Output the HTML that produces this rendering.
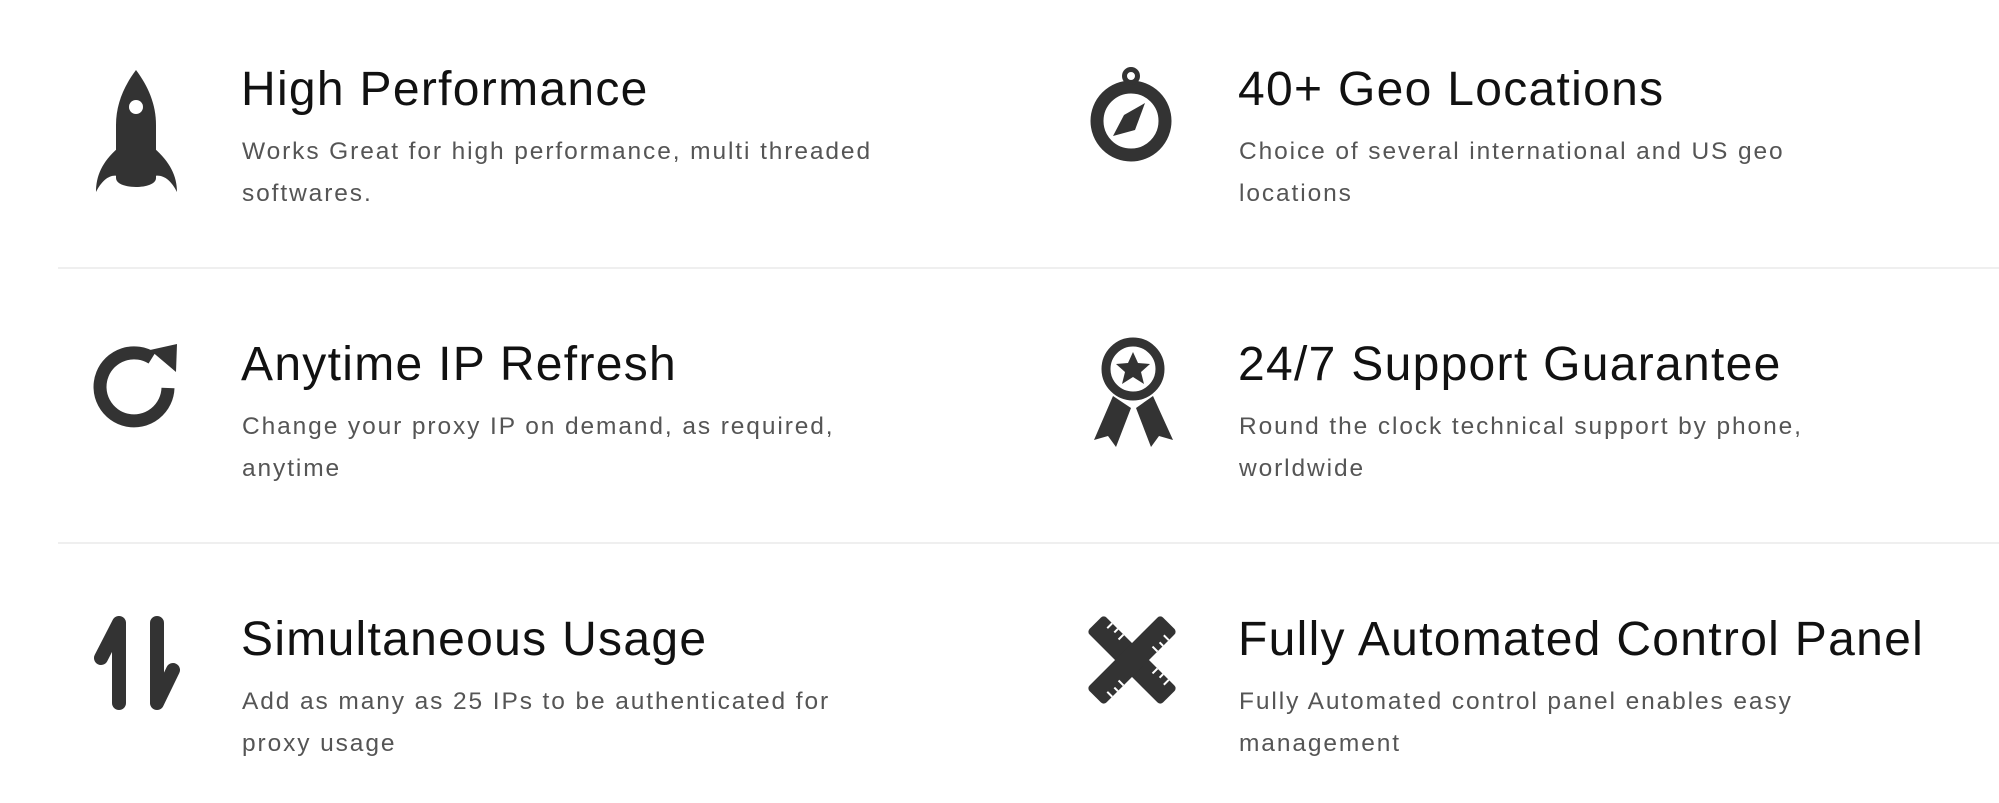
<!DOCTYPE html>
<html><head><meta charset="utf-8"><style>
body{margin:0;width:1999px;height:803px;background:#fff;position:relative;overflow:hidden;font-family:"Liberation Sans",sans-serif}
.t{position:absolute;font-size:48px;color:#111;line-height:56px;white-space:nowrap;letter-spacing:1.3px}
.d{position:absolute;font-size:24.5px;color:#555;line-height:42px;letter-spacing:1.9px;white-space:nowrap}
.hr{position:absolute;left:58px;width:1941px;height:2px;background:#efefef}
svg{position:absolute;left:0;top:0}
</style></head><body>
<svg width="1999" height="803">
<g fill="#333">
<path d="M136 70 C124 86 116 104 116 125 L116 178 C116 190 156 190 156 178 L156 125 C156 104 148 86 136 70Z"/>
<path d="M118 148 C102 162 96 176 96 192 C102 180 110 174 118 176Z"/>
<path d="M154 148 C170 162 177 176 177 192 C171 180 163 174 154 176Z"/>
<circle cx="136" cy="107" r="7" fill="#fff"/>
<circle cx="1131" cy="121" r="34" fill="none" stroke="#333" stroke-width="13"/>
<circle cx="1131" cy="76" r="6.5" fill="none" stroke="#333" stroke-width="5"/>
<path d="M1145 103 L1135 130 L1113 136 L1124 115Z"/>
<path d="M168 388 A34 34 0 1 1 152 358" fill="none" stroke="#333" stroke-width="13"/>
<path d="M150 350 L177 344 L176 372Z"/>
<circle cx="1133" cy="369" r="27" fill="none" stroke="#333" stroke-width="9"/>
<path d="M1133 352 L1138 363 L1150 364 L1141 372 L1144 384 L1133 377 L1122 384 L1125 372 L1116 364 L1128 363Z"/>
<path d="M1113 396 L1094 440 L1108 436 L1116 447 L1131 408Z"/>
<path d="M1153 396 L1173 440 L1159 436 L1151 447 L1136 408Z"/>
<path d="M119 623 L119 703 M119 623 L101 658" fill="none" stroke="#333" stroke-width="14" stroke-linecap="round" stroke-linejoin="round"/>
<path d="M157 623 L157 703 M157 703 L173 670" fill="none" stroke="#333" stroke-width="14" stroke-linecap="round" stroke-linejoin="round"/>
<g transform="translate(1132 660) rotate(45)">
<rect x="-52" y="-12" width="104" height="24" rx="4"/>
<path d="M-40 -12 v7 M-32 -12 v5 M-24 -12 v7 M24 -12 v7 M32 -12 v5 M40 -12 v7" stroke="#fff" stroke-width="2"/>
</g>
<g transform="translate(1132 660) rotate(-45)">
<rect x="-52" y="-12" width="104" height="24" rx="4"/>
<path d="M-40 12 v-7 M-32 12 v-5 M-24 12 v-7 M24 12 v-7 M32 12 v-5 M40 12 v-7" stroke="#fff" stroke-width="2"/>
</g>
</g>
</svg>
<div class="t" style="left:241px;top:62px">High Performance</div>
<div class="d" style="left:242px;top:131px">Works Great for high performance, multi threaded<br>softwares.</div>
<div class="t" style="left:1238px;top:62px">40+ Geo Locations</div>
<div class="d" style="left:1239px;top:131px">Choice of several international and US geo<br>locations</div>
<div class="hr" style="top:267px"></div>
<div class="t" style="left:241px;top:337px">Anytime IP Refresh</div>
<div class="d" style="left:242px;top:406px">Change your proxy IP on demand, as required,<br>anytime</div>
<div class="t" style="left:1238px;top:337px">24/7 Support Guarantee</div>
<div class="d" style="left:1239px;top:406px">Round the clock technical support by phone,<br>worldwide</div>
<div class="hr" style="top:542px"></div>
<div class="t" style="left:241px;top:612px">Simultaneous Usage</div>
<div class="d" style="left:242px;top:681px">Add as many as 25 IPs to be authenticated for<br>proxy usage</div>
<div class="t" style="left:1238px;top:612px">Fully Automated Control Panel</div>
<div class="d" style="left:1239px;top:681px">Fully Automated control panel enables easy<br>management</div>
</body></html>
